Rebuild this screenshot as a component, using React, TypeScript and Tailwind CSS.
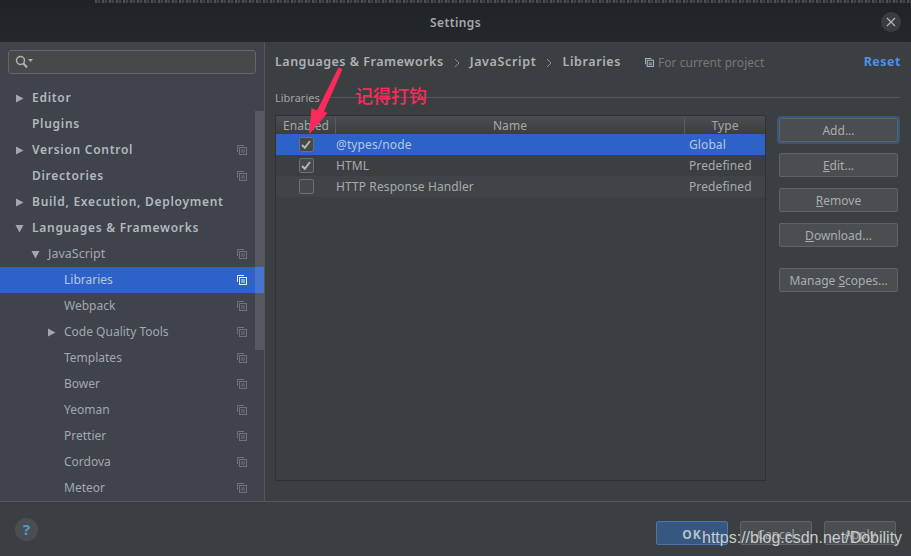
import type { ReactNode } from "react";

const tree = [
  { label: "Editor", depth: 0, arrow: "right", bold: true },
  { label: "Plugins", depth: 0, bold: true },
  { label: "Version Control", depth: 0, arrow: "right", bold: true, copy: true },
  { label: "Directories", depth: 0, bold: true, copy: true },
  { label: "Build, Execution, Deployment", depth: 0, arrow: "right", bold: true },
  { label: "Languages & Frameworks", depth: 0, arrow: "down", bold: true },
  { label: "JavaScript", depth: 1, arrow: "down", copy: true },
  { label: "Libraries", depth: 2, copy: true, selected: true },
  { label: "Webpack", depth: 2, copy: true },
  { label: "Code Quality Tools", depth: 2, arrow: "right", copy: true },
  { label: "Templates", depth: 2, copy: true },
  { label: "Bower", depth: 2, copy: true },
  { label: "Yeoman", depth: 2, copy: true },
  { label: "Prettier", depth: 2, copy: true },
  { label: "Cordova", depth: 2, copy: true },
  { label: "Meteor", depth: 2, copy: true },
];

const libraries = [
  { name: "@types/node", type: "Global", checked: true, selected: true },
  { name: "HTML", type: "Predefined", checked: true },
  { name: "HTTP Response Handler", type: "Predefined", checked: false, striped: true },
];

function CopyIcon({ color = "#6f747a" }: { color?: string }) {
  return (
    <svg width="10" height="10" viewBox="0 0 10 10" fill="none" stroke={color} strokeWidth="1">
      <path d="M0.5 7V0.5H7" />
      <rect x="2.5" y="2.5" width="7" height="7" />
      <path d="M4 5H8M4 7H8" />
    </svg>
  );
}

function Arrow({ dir }: { dir: string }) {
  return (
    <svg width="9" height="9" viewBox="0 0 9 9" fill="#a3a7ab">
      {dir === "right" ? <path d="M1 0.5L8.5 4.5L1 8.5Z" /> : <path d="M0.5 1H8.5L4.5 8.5Z" />}
    </svg>
  );
}

function Chevron() {
  return (
    <svg className="mx-[10px] shrink-0" width="6" height="10" viewBox="0 0 6 10" fill="none" stroke="#8d9093" strokeWidth="1">
      <path d="M1 1L5 5L1 9" />
    </svg>
  );
}

function TreeRow({ item }: { item: (typeof tree)[number] }) {
  const left = item.depth === 0 ? "pl-[15px]" : item.depth === 1 ? "pl-[31px]" : "pl-[47px]";
  return (
    <div className={`flex h-[26px] items-center pr-[17px] ${left} ${item.selected ? "bg-[#2d62c9]" : ""}`}>
      <span className="flex w-[17px] shrink-0 items-center">{item.arrow && <Arrow dir={item.arrow} />}</span>
      <span
        className={`flex-1 ${item.depth === 1 ? "text-[12.5px]" : "text-[12px]"} ${
          item.bold ? "font-semibold tracking-[0.72px] text-[#b4b8bc]" : item.selected ? "text-[#b9c6dd]" : "text-[#a4a8ac]"
        }`}
      >
        {item.label}
      </span>
      {item.copy && <CopyIcon color={item.selected ? "#e8eef8" : "#6f747a"} />}
    </div>
  );
}

function Checkbox({ checked }: { checked: boolean }) {
  return (
    <span className="flex h-[15px] w-[15px] items-center justify-center rounded-[2px] border border-[#6c7073] bg-[#45494b]">
      {checked && (
        <svg width="10" height="9" viewBox="0 0 10 9" fill="none" stroke="#b4b6b8" strokeWidth="2">
          <path d="M1 5L3.8 7.8L9 1" />
        </svg>
      )}
    </span>
  );
}

function SideButton({ children, focused, className = "" }: { children: ReactNode; focused?: boolean; className?: string }) {
  return (
    <button
      className={`flex h-[24px] w-[119px] items-center justify-center rounded-[2px] border border-[#5f6366] bg-[#4a4e51] pt-px text-[12px] text-[#a9adb0] ${
        focused ? "outline-2 outline-[#35587f]" : ""
      } ${className}`}
    >
      {children}
    </button>
  );
}

function FooterButton({ label, primary }: { label: string; primary?: boolean }) {
  return (
    <button
      className={`flex h-[24px] w-[72px] items-center justify-center rounded-[2px] border pt-[3px] text-[12px] ${
        primary
          ? "border-[#4a76a8] bg-[#365880] font-bold tracking-[1px] text-[#b5c0cc]"
          : "border-[#5f6366] bg-[#4a4e51] text-[#a0a4a7]"
      }`}
    >
      {label}
    </button>
  );
}

export default function App() {
  return (
    <div className="relative flex h-[556px] w-[911px] flex-col overflow-hidden bg-[#3c3f41] font-['Noto_Sans','Noto_Sans_CJK_SC',sans-serif]">
      {/* title bar */}
      <div className="relative flex h-[42px] shrink-0 items-center justify-center overflow-hidden bg-gradient-to-b from-[#1f2226] to-[#25282b] pt-[3px]">
        {/* smeared edge of the window behind the dialog */}
        <div className="absolute left-[95px] right-0 top-0 h-[3px] bg-[repeating-linear-gradient(90deg,#4c5053_0_2px,#2a2d30_2px_3px,#3f4346_3px_5px,#25282b_5px_7px)] blur-[0.5px]" />
        <span className="text-[12px] font-semibold tracking-[0.4px] text-[#a5a8ab]">Settings</span>
        <button className="absolute right-[10px] top-[12px] flex h-[20px] w-[20px] items-center justify-center rounded-full bg-[#3a3d40]">
          <svg width="10" height="10" viewBox="0 0 10 10" stroke="#b5b7b9" strokeWidth="1.1">
            <path d="M1 1L9 9M9 1L1 9" />
          </svg>
        </button>
      </div>

      <div className="flex min-h-0 flex-1">
        {/* sidebar */}
        <aside className="relative w-[265px] shrink-0 border-r border-[#54575a] bg-[#3e434c]">
          <div className="mx-2 mb-[11px] mt-2 flex h-[24px] w-[248px] items-center gap-[1px] rounded-[3px] border border-[#64676a] bg-[#45494a] pl-[6px]">
            <svg width="18" height="14" viewBox="0 0 18 14" fill="none" stroke="#b0b3b5" strokeWidth="1.5">
              <circle cx="5.5" cy="5.5" r="4" />
              <path d="M8.5 8.5L12 12.5" strokeWidth="2" />
              <path d="M13 4H18L15.5 7Z" fill="#b0b3b5" stroke="none" />
            </svg>
          </div>
          {tree.map((item) => (
            <TreeRow key={item.label} item={item} />
          ))}
          <div className="absolute right-0 top-[69px] h-[239px] w-[9px] bg-white/12" />
        </aside>

        {/* content */}
        <main className="min-w-0 flex-1 pl-[10px] pr-[11px]">
          <div className="flex h-[40px] items-center pt-px text-[12.5px]">
            <span className="font-semibold tracking-[0.5px] text-[#afb2b5]">Languages &amp; Frameworks</span>
            <Chevron />
            <span className="font-semibold tracking-[0.65px] text-[#afb2b5]">JavaScript</span>
            <Chevron />
            <span className="font-semibold tracking-[0.6px] text-[#afb2b5]">Libraries</span>
            <span className="ml-[24px] mr-[4px]">
              <svg width="9" height="9" viewBox="0 0 10 10" fill="none" stroke="#9fb3c4" strokeWidth="1.2">
                <path d="M0.5 7V0.5H7" />
                <rect x="2.5" y="2.5" width="7" height="7" fill="#3c3f41" />
                <path d="M4 5.5H8M4 7.5H8" />
              </svg>
            </span>
            <span className="text-[12px] tracking-[0.05px] text-[#75787b]">For current project</span>
            <span className="ml-auto mr-[-1px] font-bold tracking-[0.5px] text-[#4f8fe6]">Reset</span>
          </div>

          <div className="flex h-[33px] items-center">
            <span className="text-[11px] text-[#a0a3a6]">Libraries</span>
            <div className="ml-[6px] mt-[-2px] h-px flex-1 bg-[#55585a]" />
          </div>

          <div className="flex gap-[13px]">
            {/* table */}
            <div className="h-[366px] w-[491px] shrink-0 border border-[#2f3234] bg-[#3c3f41]">
              <div className="flex h-[18px] items-center bg-gradient-to-b from-[#4b4e50] to-[#3b3e40] pt-[2px] text-[12px] tracking-[0.1px] text-[#a4a7aa]">
                <span className="w-[60px] border-r border-[#5a5d5f] pl-px text-center">Enabled</span>
                <span className="flex-1 text-center">Name</span>
                <span className="w-[81px] border-l border-[#5a5d5f] text-center">Type</span>
              </div>
              {libraries.map((lib) => (
                <div
                  key={lib.name}
                  className={`flex h-[21px] items-center text-[12px] tracking-[0.1px] ${
                    lib.selected ? "bg-[#2d62c9] text-[#b9c6dd]" : lib.striped ? "bg-[#414446] text-[#a7aaad]" : "text-[#a7aaad]"
                  }`}
                >
                  <span className="flex w-[60px] justify-center">
                    <Checkbox checked={lib.checked} />
                  </span>
                  <span className="flex-1">{lib.name}</span>
                  <span className="w-[76px]">{lib.type}</span>
                </div>
              ))}
            </div>

            {/* side buttons */}
            <div className="flex flex-col gap-[11px] pt-[3px]">
              <SideButton focused>Add...</SideButton>
              <SideButton>
                <span><u>E</u>dit...</span>
              </SideButton>
              <SideButton>
                <span><u>R</u>emove</span>
              </SideButton>
              <SideButton>
                <span><u>D</u>ownload...</span>
              </SideButton>
              <SideButton className="mt-[10px]">
                <span>Manage <u>S</u>copes...</span>
              </SideButton>
            </div>
          </div>
        </main>
      </div>

      {/* footer */}
      <footer className="flex h-[55px] shrink-0 items-center border-t border-[#55585a] bg-[#3c3f41] pl-[15px] pr-[15px]">
        <span className="flex h-[23px] w-[23px] items-center justify-center rounded-full bg-[#4a4e51] text-[15px] font-bold text-[#4a9bd1]">?</span>
        <div className="ml-auto mt-[8px] flex gap-[12px]">
          <FooterButton label="OK" primary />
          <FooterButton label="Cancel" />
          <FooterButton label="Apply" />
        </div>
      </footer>

      {/* annotation over the screenshot */}
      <svg className="absolute left-[300px] top-[64px]" width="50" height="72" viewBox="0 0 50 72" fill="#fb2a5a">
        <path d="M38.5 3.5L42.5 5L24 47.5L27.5 49L9 70.5L11.5 44L17 46.5Z" />
      </svg>
      <span className="absolute left-[355px] top-[84px] text-[18px] font-medium leading-[24px] text-[#fb2a5a]">记得打钩</span>
      <span className="absolute left-[702px] top-[529px] font-['Liberation_Sans',sans-serif] text-[16px] leading-[18px] text-[#c9cbcd]">
        https://blog.csdn.net/Dobility
      </span>
    </div>
  );
}
